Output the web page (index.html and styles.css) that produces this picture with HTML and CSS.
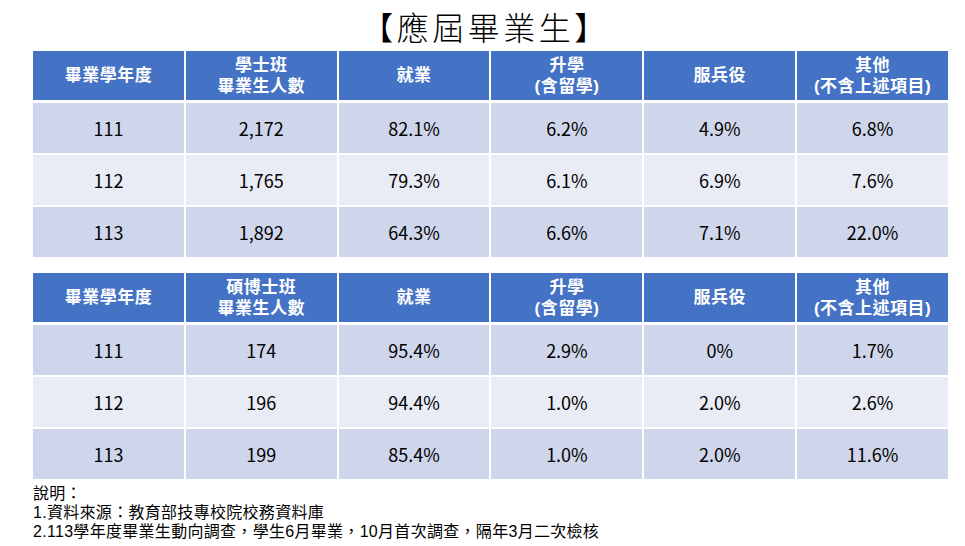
FILE: index.html
```html
<!DOCTYPE html>
<html lang="zh-Hant">
<head>
<meta charset="utf-8">
<title>應屆畢業生</title>
<link rel="stylesheet" href="styles.css">
</head>
<body>
<div class="page">
  <h1 class="title">【應屆畢業生】</h1>

  <div class="grid">
    <div class="cell h">畢業學年度</div>
    <div class="cell h">學士班<br>畢業生人數</div>
    <div class="cell h">就業</div>
    <div class="cell h">升學<br>(含留學)</div>
    <div class="cell h">服兵役</div>
    <div class="cell h">其他<br>(不含上述項目)</div>

    <div class="cell odd">111</div><div class="cell odd">2,172</div><div class="cell odd">82.1%</div><div class="cell odd">6.2%</div><div class="cell odd">4.9%</div><div class="cell odd">6.8%</div>
    <div class="cell even">112</div><div class="cell even">1,765</div><div class="cell even">79.3%</div><div class="cell even">6.1%</div><div class="cell even">6.9%</div><div class="cell even">7.6%</div>
    <div class="cell odd">113</div><div class="cell odd">1,892</div><div class="cell odd">64.3%</div><div class="cell odd">6.6%</div><div class="cell odd">7.1%</div><div class="cell odd">22.0%</div>
  </div>

  <div class="grid second">
    <div class="cell h">畢業學年度</div>
    <div class="cell h">碩博士班<br>畢業生人數</div>
    <div class="cell h">就業</div>
    <div class="cell h">升學<br>(含留學)</div>
    <div class="cell h">服兵役</div>
    <div class="cell h">其他<br>(不含上述項目)</div>

    <div class="cell odd">111</div><div class="cell odd">174</div><div class="cell odd">95.4%</div><div class="cell odd">2.9%</div><div class="cell odd">0%</div><div class="cell odd">1.7%</div>
    <div class="cell even">112</div><div class="cell even">196</div><div class="cell even">94.4%</div><div class="cell even">1.0%</div><div class="cell even">2.0%</div><div class="cell even">2.6%</div>
    <div class="cell odd">113</div><div class="cell odd">199</div><div class="cell odd">85.4%</div><div class="cell odd">1.0%</div><div class="cell odd">2.0%</div><div class="cell odd">11.6%</div>
  </div>

  <div class="notes">
    <p>說明：</p>
    <p>1.資料來源：教育部技專校院校務資料庫</p>
    <p>2.113學年度畢業生動向調查，學生6月畢業，10月首次調查，隔年3月二次檢核</p>
  </div>
</div>
</body>
</html>
```

FILE: styles.css
```css
html, body {
  margin: 0;
  padding: 0;
  background: #ffffff;
}

.page {
  width: 965px;
  height: 546px;
  overflow: hidden;
  font-family: "Noto Sans CJK TC", "Noto Sans", sans-serif;
  color: #000000;
}

.title {
  margin: 0;
  height: 51px;
  display: flex;
  align-items: center;
  justify-content: center;
  font-size: 32px;
  font-weight: 300;
  line-height: 1;
  letter-spacing: 3.5px;
  padding-left: 6px;
  box-sizing: border-box;
}

.grid {
  display: grid;
  grid-template-columns: repeat(6, 1fr);
  column-gap: 2px;
  row-gap: 2px;
  width: 915px;
  margin-left: 33px;
}

.grid.second {
  margin-top: 16px;
}

.cell {
  display: flex;
  align-items: center;
  justify-content: center;
  text-align: center;
}

.h {
  height: 49px;
  margin-bottom: 1px;
  background: #4472c4;
  color: #ffffff;
  font-family: "Liberation Sans", "Noto Sans CJK TC", sans-serif;
  font-weight: 700;
  font-size: 17px;
  line-height: 21px;
  letter-spacing: 0.5px;
}

.odd,
.even {
  height: 50px;
  font-size: 18px;
  font-weight: 400;
}

.odd {
  background: #cfd5ea;
}

.even {
  background: #e9ebf5;
}

.notes {
  margin: 5px 0 0 33px;
  font-family: "Liberation Sans", "Noto Sans CJK TC", sans-serif;
  font-size: 16px;
  line-height: 19px;
  letter-spacing: 0.3px;
}

.notes p {
  margin: 0;
}
```
